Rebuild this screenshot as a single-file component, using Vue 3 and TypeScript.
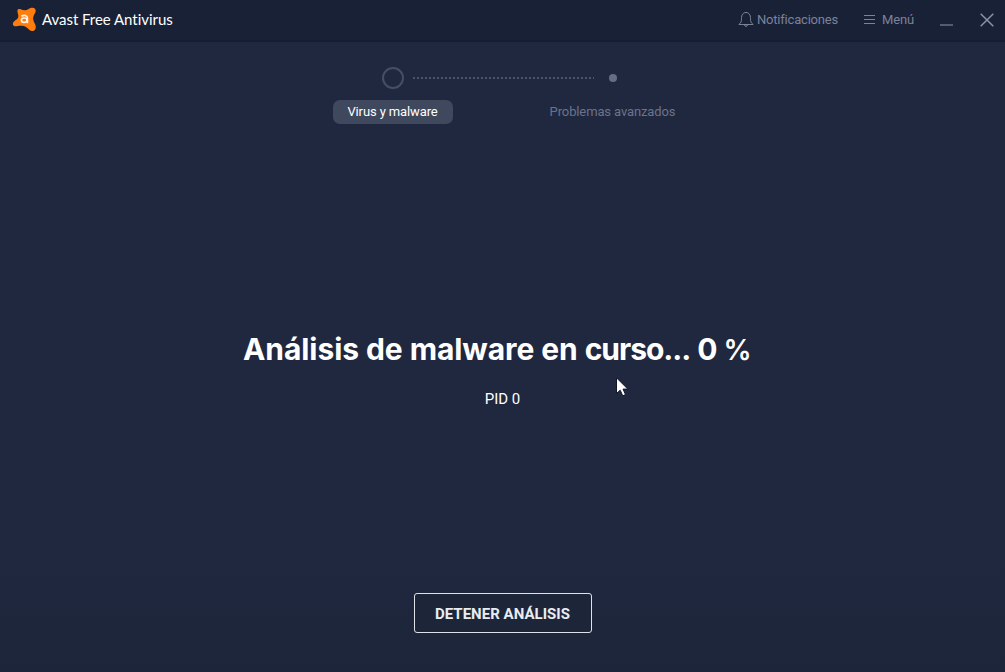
<script setup lang="ts">
import { ref } from 'vue'

const progress = ref(0)
const pid = ref(0)
</script>

<template>
  <div class="window">
    <header class="titlebar">
      <svg class="logo" width="25" height="25" viewBox="0 0 25 25">
        <path d="M5.400 3.900C5.400 2.300 6.900 1.700 8.500 2.300C12 3.700 14.200 3.700 16.600 2C18.500 .7 21.500 .1 23 1.700C24.300 3.200 23.700 5 22.600 6.800C20.800 9.800 20.600 12 22.200 15.500C23.400 17.700 24.300 19.400 23.500 21.700C22.600 24.400 19.400 24.900 17.200 22.800C14.400 20.100 13 18.900 9.500 18.700C6.900 18.600 5 19.300 3.300 19.300C1.200 19.200 .1 17.200 1.400 15.300C2.800 13.200 5.800 12.500 6.300 9.800C6.700 7.500 5.400 6.100 5.400 3.900Z" fill="#ff7d0c" />
        <g fill="none" stroke="#fff3e6" stroke-width="1.700">
          <ellipse cx="12.200" cy="13.200" rx="2.800" ry="2.200" />
          <path d="M9.400 9.100C12.500 7.900 15.400 8.300 15.400 11.200V16.200" />
        </g>
      </svg>
      <span class="title">Avast Free Antivirus</span>
      <div class="actions">
        <span class="action notifications">
          <svg width="16" height="17" viewBox="0 0 16 17" fill="none" stroke="currentColor" stroke-width="1">
            <path d="M.8 13.500C3 12 3.500 10.500 3.500 7.500C3.500 3.800 5 1.500 8 1.500S12.500 3.800 12.500 7.500C12.500 10.500 13 12 15.200 13.500ZM6.500 14C6.700 15.800 9.300 15.800 9.500 14" />
          </svg>
          <span>Notificaciones</span>
        </span>
        <span class="action menu">
          <svg width="12" height="11" viewBox="0 0 12 11" stroke="currentColor"><path d="M0 1.500H11M0 5.500H11M0 9.500H11" /></svg>
          <span>Menú</span>
        </span>
        <svg class="minimize" width="14" height="2" viewBox="0 0 14 2"><path d="M0 1H13" stroke="currentColor" stroke-width="1.200" /></svg>
        <svg class="close" width="14" height="14" viewBox="0 0 14 14"><path d="M.7 .7L13.300 13.300M13.300 .7L.7 13.300" stroke="currentColor" stroke-width="1.500" /></svg>
      </div>
    </header>

    <nav class="steps">
      <div class="track">
        <span class="ring"></span>
        <svg class="dots" width="181" height="2" viewBox="0 0 181 2"><path d="M0 1H181" stroke="#59617a" stroke-width="1.500" stroke-dasharray="2 2" /></svg>
        <span class="dot"></span>
      </div>
      <div class="labels">
        <span class="pill">Virus y malware</span>
        <span class="next">Problemas avanzados</span>
      </div>
    </nav>

    <main class="status">
      <h1>Análisis de malware en <span class="tight">curso...</span> <span class="value">{{ progress }}</span> <span class="percent">%</span></h1>
      <p>PID {{ pid }}</p>
    </main>

    <button class="stop" type="button">DETENER ANÁLISIS</button>

    <svg class="cursor" width="14" height="20" viewBox="0 0 14 20">
      <path d="M.5 .8V16.500L4.200 13.200L6.700 18.800L9.500 17.500L7 12.100H11.800Z" fill="#fff" stroke="#101626" stroke-width="1" />
    </svg>
  </div>
</template>

<style>
body { background: #202840; }
</style>

<style scoped>
.window {
  position: relative;
  display: flex;
  flex-direction: column;
  align-items: center;
  width: 1005px;
  height: 672px;
  overflow: hidden;
  background: linear-gradient(#202840 0, #202840 540px, #1d253a 672px);
  color: #fff;
  font-family: Inter, "Liberation Sans", sans-serif;
}
.titlebar {
  box-sizing: border-box;
  display: flex;
  align-items: center;
  width: 100%;
  height: 42px;
  padding: 0 11px 1px 12px;
  background: #192137;
  border-bottom: 2px solid #161d32;
  white-space: nowrap;
}
.logo { flex: none; }
.title { margin: -2px 0 0 5px; font: 15px/20px Lato, sans-serif; font-variant-ligatures: none; letter-spacing: -.04px; }
.actions { display: flex; align-items: center; margin-left: auto; color: #7c8299; font: 13px/18px Roboto, sans-serif; }
.action { display: flex; align-items: center; }
.notifications { width: 126px; gap: 3px; letter-spacing: -.2px; }
.menu { width: 76px; gap: 6px; letter-spacing: -.1px; }
.minimize { margin: 10px 26px 0 0; }
.close { color: #8c92a6; }
.steps { width: 340px; padding-top: 25px; }
.track { display: flex; align-items: center; height: 22px; padding-left: 49px; }
.ring { box-sizing: border-box; width: 22px; height: 22px; border: 2px solid #464e66; border-radius: 50%; }
.dots { margin: 0 15px 0 9px; }
.dot { width: 8px; height: 8px; border-radius: 50%; background: #666e83; }
.labels { display: flex; justify-content: space-between; margin-top: 11px; font: 13px/24px Roboto, sans-serif; letter-spacing: -.12px; white-space: nowrap; }
.pill { width: 120px; height: 24px; border-radius: 7px; background: #40485d; text-align: center; }
.next { width: 120px; display: flex; justify-content: center; color: #6b7389; }
.status { width: 100%; margin-top: 206px; display: flex; flex-direction: column; align-items: center; white-space: nowrap; }
h1 { align-self: flex-start; margin: 0 0 0 243px; font-size: 30px; line-height: 38px; font-weight: 700; letter-spacing: -.07px; }
.tight { letter-spacing: -1.050px; }
.value { font-weight: 650; }
.percent { margin-left: -1px; font-size: 28px; font-weight: 600; letter-spacing: -.5px; }
p { margin: 20px 0 0; font: 15px/20px Roboto, sans-serif; }
.stop {
  width: 178px;
  height: 40px;
  margin-top: 184px;
  padding: 2px 0 0;
  border: 1px solid #dfe3e9;
  border-radius: 3px;
  background: #1d2539;
  color: #e8edf1;
  font: 700 15px/20px Roboto, sans-serif;
  letter-spacing: .03px;
  white-space: nowrap;
}
.cursor { position: absolute; left: 616px; top: 377px; }
</style>
